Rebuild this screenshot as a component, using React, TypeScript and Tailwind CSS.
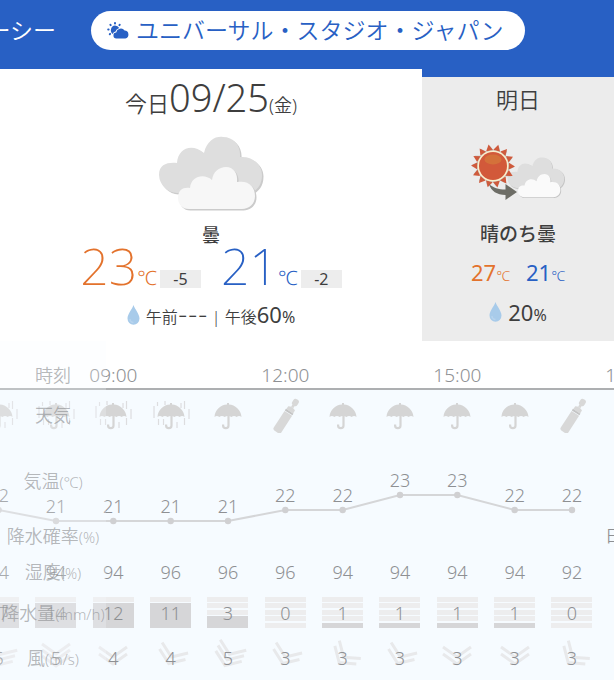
import React from "react";

type Weather = "rain" | "umbrella" | "folded" | "sunset";
type Hour = {
  time?: string;
  weather: Weather;
  temp?: number;
  chance?: string;
  humidity?: number;
  amount?: number;
  bars?: number;
  wind?: number;
  angle?: number;
  chevrons?: number;
};

const hours: Hour[] = [
  { weather: "rain", temp: 22, humidity: 94, amount: 17, bars: 4, wind: 5, angle: 22, chevrons: 3 },
  { weather: "rain", temp: 21, humidity: 94, amount: 14, bars: 4, wind: 5, angle: 0, chevrons: 3 },
  { time: "09:00", weather: "rain", temp: 21, humidity: 94, amount: 12, bars: 4, wind: 4, angle: 0, chevrons: 2 },
  { weather: "rain", temp: 21, humidity: 96, amount: 11, bars: 4, wind: 4, angle: 22, chevrons: 2 },
  { weather: "umbrella", temp: 21, humidity: 96, amount: 3, bars: 2, wind: 5, angle: 22, chevrons: 3 },
  { time: "12:00", weather: "folded", temp: 22, humidity: 96, amount: 0, bars: 0, wind: 3, angle: 22, chevrons: 2 },
  { weather: "umbrella", temp: 22, humidity: 94, amount: 1, bars: 1, wind: 3, angle: 40, chevrons: 2 },
  { weather: "umbrella", temp: 23, humidity: 94, amount: 1, bars: 1, wind: 3, angle: 22, chevrons: 2 },
  { time: "15:00", weather: "umbrella", temp: 23, humidity: 94, amount: 1, bars: 1, wind: 3, angle: 0, chevrons: 2 },
  { weather: "umbrella", temp: 22, humidity: 94, amount: 1, bars: 1, wind: 3, angle: 0, chevrons: 2 },
  { weather: "folded", temp: 22, humidity: 92, amount: 0, bars: 0, wind: 3, angle: 40, chevrons: 2 },
  { time: "18:00", weather: "sunset", chance: "日の入" },
];

const rowLabels = [
  { name: "時刻", unit: "", row: "h-12 pt-5" },
  { name: "天気", unit: "", row: "h-[51px]" },
  { name: "気温", unit: "(℃)", row: "h-[82px]" },
  { name: "降水確率", unit: "(%)", row: "h-7" },
  { name: "湿度", unit: "(%)", row: "h-11" },
  { name: "降水量", unit: "(mm/h)", row: "h-[38px]" },
  { name: "風", unit: "(m/s)", row: "h-12 pt-1" },
];

const strip = "grid grid-cols-12";
const cell = "flex items-center justify-center";
const badge = "ml-[3px] w-[41px] bg-[#ededed] text-center text-base leading-[18px] font-normal text-[#3e3e3e]";

function SunCloud() {
  return (
    <svg viewBox="0 0 22 17" className="h-[17px] w-[22px] shrink-0" fill="currentColor" aria-hidden="true">
      <g stroke="currentColor" strokeWidth="2" strokeLinecap="round">
        <path d="M8 1v.4M3.400 2.800l.3.300M12.700 2.800l-.3.300M1.200 7.400h.4M2.800 12.200l.3-.3" />
      </g>
      <path d="M8 3.600a4.700 4.700 0 0 1 4.200 2.500Q9 7.500 8.500 9.600Q6.500 10 5.700 12A4.700 4.700 0 0 1 8 3.600Z" />
      <path d="M9.500 16.400a2.900 2.900 0 0 1-.3-5.800 4.700 4.700 0 0 1 8.400-2.100 4 4 0 0 1 .7 7.900Z" />
    </svg>
  );
}

function CloudShape({ back, front, shade }: { back: string; front: string; shade: string }) {
  const rear =
    "M19 57A19 19 0 0 1 1 39C1 28 10 26 19 27C20 12 34 7 46 17C49 4 58 0 65 1C76 1 83 10 82 21C95 20 104 29 104 39C104 50 98 54 94 57Z";
  const fore =
    "M31 73C24 73 20 68 20 62C20 53 26 51 32 52C33 40 46 37 54 44C55 36 61 31 68 31C76 31 80 38 79 46C91 44 97 51 97 60C97 68 91 73 84 73Z";
  return (
    <>
      <path d={rear} fill={shade} transform="translate(1.500 1.500)" />
      <path d={rear} fill={back} />
      <path d={fore} fill={shade} transform="translate(1.500 1.500)" />
      <path d={fore} fill={front} />
    </>
  );
}

function CloudIcon() {
  return (
    <svg viewBox="0 0 106 76" className="h-[76px] w-[106px]" role="img" aria-label="曇">
      <CloudShape back="#dedede" front="#f7f7f7" shade="#cbcbcb" />
    </svg>
  );
}

function SunThenCloudIcon() {
  return (
    <svg viewBox="0 0 96 58" className="h-[58px] w-24" role="img" aria-label="晴のち曇">
      <g transform="translate(37 14) scale(.55)">
        <CloudShape back="#dedede" front="#fafafa" shade="#c4c4c4" />
      </g>
      {Array.from({ length: 14 }, (_, i) => (
        <g key={i} transform={`rotate(${(i * 360) / 14 + 13} 23 23)`}>
          <path d="M19.800 8L24.200 2.200L27.200 8.400Z" fill="#b9b3ad" />
          <path d="M19.600 7L23.400 1L26.400 7.400Z" fill="#cf5a3c" />
        </g>
      ))}
      <circle cx="23" cy="23" r="15.500" fill="#fbeecb" />
      <circle cx="23" cy="23" r="14" fill="#d2593a" />
      <ellipse cx="23" cy="16.500" rx="8.500" ry="5" fill="#d4713a" />
      <path d="M19 41c5 4 9 5.500 16.500 5.500V41L47 49l-11.500 8v-5C27 52 21 48 19 41Z" fill="#6d6d66" />
    </svg>
  );
}

function Drop() {
  return (
    <svg viewBox="0 0 13 20" className="h-5 w-[13px] shrink-0" aria-hidden="true">
      <path d="M6.500 0C8 4.500 12.500 9 12.500 13.500a6 6.200 0 0 1-12 0C.5 9 5 4.500 6.500 0Z" fill="#a8cbea" />
      <path d="M3 14a3.500 3.500 0 0 0 3.500 3.500" stroke="#b8d4ee" strokeWidth="1.500" fill="none" />
    </svg>
  );
}

function HourIcon({ kind }: { kind: Weather }) {
  if (kind === "folded") {
    return (
      <svg viewBox="0 0 36 36" className="size-9" fill="#d8d8d8" role="img" aria-label="折りたたみ傘">
        <g transform="translate(1 1) rotate(33 18 18)">
          <rect x="15.500" y="-2" width="6" height="7" rx="2.500" />
          <rect x="17.200" y="4.500" width="2.600" height="3" />
          <path d="M14.500 8.500Q18.500 6 22.500 8.500V12H14.500Z" />
          <rect x="14" y="12" width="9" height="2" fill="#c4c4c4" />
          <path d="M14 14.500H23V34a2.500 2.500 0 0 1-2.500 2.500h-4a2.500 2.500 0 0 1-2.500-2.500Z" />
        </g>
      </svg>
    );
  }
  if (kind === "sunset") {
    return (
      <svg viewBox="0 0 36 36" className="size-9" stroke="#e2e2e2" strokeWidth="2" fill="none" role="img" aria-label="日の入">
        <path d="M9 26a9 9 0 0 1 18 0M3 26h30M18 9v5M6 14l3 3M30 14l-3 3" />
      </svg>
    );
  }
  return (
    <svg viewBox="0 0 40 30" className="h-[30px] w-10" fill="#d5d5d5" role="img" aria-label="傘">
      {kind === "rain" && (
        <path
          d="M3 6v12M6.500 2v4M14 1v4M30 3v5M33.500 1v8M38 9v10M7.500 19v6M12.500 19v6M26 22v6M33.500 18v7"
          stroke="#dddddf"
          strokeWidth="1.200"
        />
      )}
      <path d="M6.500 17C7 9.500 12.500 5 19 4.500V3h2v1.500C27 5 33 9.500 33.500 17Q31 15.200 28.700 17Q26 15.200 23.500 17Q20 15.200 16.500 17Q14 15.200 11.300 17Q9 15.200 6.500 17Z" />
      <path d="M20.500 15V25.500a2.700 2.700 0 0 1-5.400 0V24.500" fill="none" stroke="#d5d5d5" strokeWidth="2.200" />
    </svg>
  );
}

function WindMark({ angle, chevrons }: { angle: number; chevrons: number }) {
  const apexes = chevrons === 3 ? [16, 22, 28] : [19, 26];
  return (
    <svg viewBox="0 0 40 40" className="absolute size-10" fill="none" stroke="#e8e9eb" strokeWidth="3" aria-hidden="true">
      <g transform={`rotate(${angle} 20 20)`}>
        {apexes.map((y) => (
          <path key={y} d={`M6 ${y - 10}L20 ${y}L34 ${y - 10}`} />
        ))}
      </g>
    </svg>
  );
}

const columnWidth = 688 / 12;
const pointY: Record<number, number> = { 21: 81, 22: 70, 23: 55 };
const fillHeight = [0, 5, 12, 18, 25];

function TemperatureChart() {
  const points = hours.flatMap((h, i) =>
    h.temp === undefined ? [] : [{ x: (i + 0.5) * columnWidth, y: pointY[h.temp], temp: h.temp }]
  );
  return (
    <svg viewBox="0 0 688 82" className="block h-[82px] w-full overflow-visible" role="img" aria-label="気温">
      <polyline points={points.map((p) => `${p.x},${p.y}`).join(" ")} fill="none" stroke="#d5d6d8" strokeWidth="2" />
      {points.map((p) => (
        <g key={p.x}>
          <circle cx={p.x} cy={p.y} r="3.200" fill="#d0d0d2" />
          <text x={p.x} y={p.y - 8} textAnchor="middle" fill="#8e9093" className="text-lg">
            {p.temp}
          </text>
        </g>
      ))}
    </svg>
  );
}

export default function App() {
  return (
    <main className="overflow-hidden bg-white font-['Noto_Sans','Noto_Sans_CJK_JP',sans-serif] font-[350] text-[#3e3e3e]">
      <nav className="flex h-[69px] bg-[#2860c4] pt-[11px] text-[23px] leading-[39px]">
        <div className="-ml-[152px] flex items-start gap-[35px] whitespace-nowrap">
          <a href="#sea" className="w-[208px] text-right text-white">
            東京ディズニーシー
          </a>
          <a href="#usj" className="flex items-center gap-[7px] rounded-full bg-white pr-[21px] pl-4 text-[#2860c4]">
            <SunCloud />
            ユニバーサル・スタジオ・ジャパン
          </a>
        </div>
      </nav>

      <div className="flex h-[272px]">
        <section className="flex flex-[422] flex-col items-center">
          <h2 className="mt-1.5 flex items-baseline text-[22px] leading-[44px]">
            今日<span className="text-[38px] font-light">09/25</span>
            <span className="text-lg">(金)</span>
          </h2>
          <div className="mt-[11px]">
            <CloudIcon />
          </div>
          <p className="mt-[11px] text-lg leading-6 font-medium">曇</p>
          <div className="flex gap-5 leading-[38px]">
            <p className="flex items-baseline text-[#e3722c]">
              <span className="text-[50px] font-extralight">23</span>
              <span className="text-xl">℃</span>
              <span className={badge}>-5</span>
            </p>
            <p className="flex items-baseline text-[#2860c4]">
              <span className="text-[50px] font-extralight">21</span>
              <span className="text-xl">℃</span>
              <span className={badge}>-2</span>
            </p>
          </div>
          <p className="mt-1.5 flex items-center gap-1.5 leading-8">
            <Drop />
            <span className="text-base">
              午前<span className="font-['Inter',sans-serif] text-[22px]">---</span> | 午後
              <span className="font-normal">
                <span className="text-[22px]">60</span>%
              </span>
            </span>
          </p>
        </section>
        <section className="flex flex-[192] flex-col bg-[#2860c4] pt-2">
          <div className="flex grow flex-col items-center bg-[#ececec]">
            <h2 className="mt-1 text-[22px] leading-9">明日</h2>
            <div className="mt-[26px]">
              <SunThenCloudIcon />
            </div>
            <p className="mt-[19px] text-[19px] leading-7 font-medium">晴のち曇</p>
            <p className="mt-2 flex items-baseline gap-4 text-[22px] leading-8 font-normal">
              <span className="text-[#e3722c]">
                27<span className="text-sm font-light">℃</span>
              </span>
              <span className="text-[#2860c4]">
                21<span className="text-sm font-light">℃</span>
              </span>
            </p>
            <p className="mt-2 flex items-center gap-1.5 leading-8 font-normal">
              <Drop />
              <span className="text-[22px]">
                20<span className="text-base">%</span>
              </span>
            </p>
          </div>
        </section>
      </div>

      <section className="relative overflow-hidden bg-[#f6fbff] text-[#8e9093]">
        <div className="-ml-[30px] w-[688px] text-lg">
          <div className={`${strip} h-[49px] border-b-2 border-[#adafb1] bg-white pt-5 text-[19px]`}>
            {hours.map((h, i) => (
              <div key={i} className={cell}>
                {h.time}
              </div>
            ))}
          </div>
          <div className={`${strip} h-[50px]`}>
            {hours.map((h, i) => (
              <div key={i} className={cell}>
                <HourIcon kind={h.weather} />
              </div>
            ))}
          </div>
          <TemperatureChart />
          <div className={`${strip} h-7 text-base`}>
            {hours.map((h, i) => (
              <div key={i} className={`${cell} whitespace-nowrap`}>
                {h.chance}
              </div>
            ))}
          </div>
          <div className={`${strip} h-11`}>
            {hours.map((h, i) => (
              <div key={i} className={cell}>
                {h.humidity}
              </div>
            ))}
          </div>
          <div className={`${strip} h-9`}>
            {hours.map((h, i) => (
              <div key={i} className={cell}>
                {h.bars !== undefined && (
                  <div className="relative h-[31px] w-[41px]">
                    <div className="flex h-full flex-col justify-between">
                      {[5, 4, 3, 2, 1].map((n) => (
                        <div key={n} className="h-[5px] bg-[#ededee]" />
                      ))}
                    </div>
                    <div className="absolute inset-x-0 bottom-0 bg-[#d6d6d8]" style={{ height: fillHeight[h.bars] }} />
                    <span className="absolute inset-0 text-center leading-8">{h.amount}</span>
                  </div>
                )}
              </div>
            ))}
          </div>
          <div className={`${strip} h-[50px] pt-1.5`}>
            {hours.map((h, i) => (
              <div key={i} className={`${cell} relative`}>
                {h.chevrons !== undefined && <WindMark angle={h.angle ?? 0} chevrons={h.chevrons} />}
                <span className="relative">{h.wind}</span>
              </div>
            ))}
          </div>
        </div>
        <div className="absolute inset-y-0 left-0 w-[106px] bg-[#f6fbff]/25 text-[#8e9093]/65">
          {rowLabels.map((r) => (
            <div key={r.name} className={`${cell} ${r.row} text-lg whitespace-nowrap`}>
              <span>
                {r.name}
                <span className="text-[15px]">{r.unit}</span>
              </span>
            </div>
          ))}
        </div>
      </section>
    </main>
  );
}
